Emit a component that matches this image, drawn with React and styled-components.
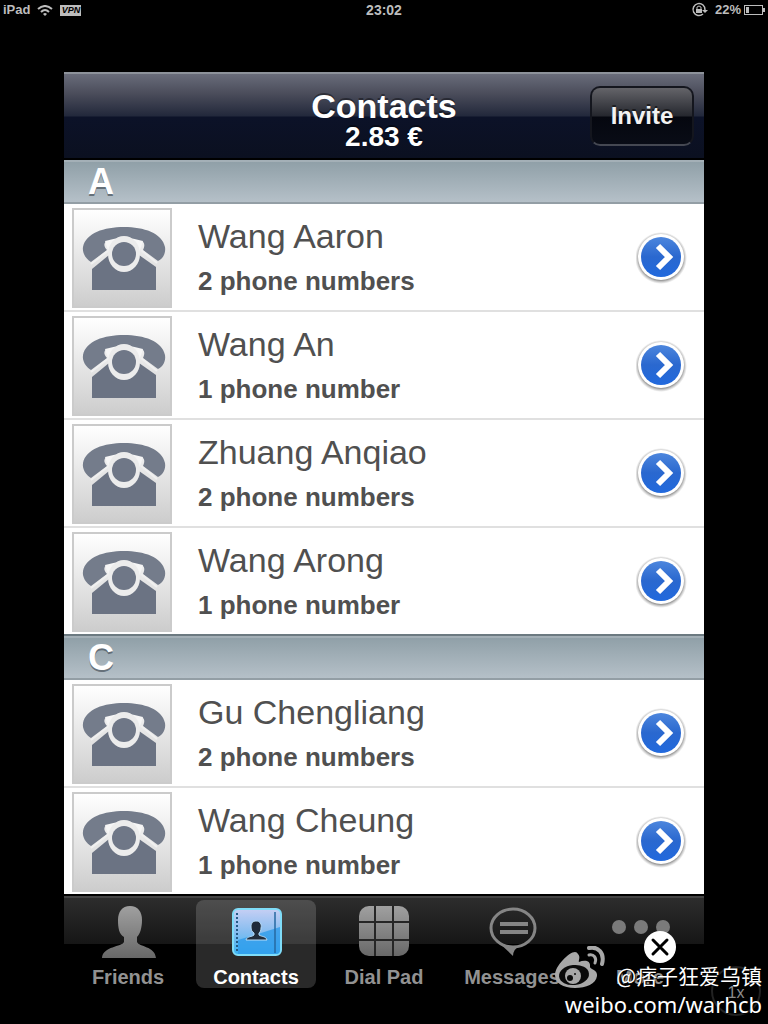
import React from "react";
import styled, { createGlobalStyle } from "styled-components";

const GlobalStyle = createGlobalStyle`
    * { box-sizing: border-box; }
    body { margin: 0; background: #000; font-family: "Liberation Sans", Arial, sans-serif; }
    h1, h2, h3, p, ul { margin: 0; padding: 0; }
    ul { list-style: none; }
    button { margin: 0; padding: 0; border: none; background: none; font-family: inherit; cursor: pointer; }
    a { text-decoration: none; color: inherit; }
    svg { display: block; }
`;

const Screen = styled.div`
    position: relative;
    min-height: 100vh;
    background: #000;
    padding-bottom: 32px;
    overflow: hidden;
`;

const StatusBar = styled.div`
    display: grid;
    grid-template-columns: 1fr auto 1fr;
    align-items: center;
    height: 20px;
    padding: 0 3px;
    color: #bdbdbd;
    font-size: 14px;
    line-height: 20px;
    font-weight: bold;
`;
const StatusLeft = styled.div`
    display: flex;
    align-items: center;
    gap: 7px;
    font-size: 13px;
`;
const StatusRight = styled.div`
    display: flex;
    align-items: center;
    justify-content: flex-end;
    gap: 3px;
    font-size: 13px;
    .lock { margin-right: 4px; }
`;
const Vpn = styled.span`
    background: #bdbdbd;
    color: #000;
    width: 21px;
    height: 11px;
    font-size: 9px;
    line-height: 11px;
    font-style: italic;
    text-align: center;
`;

const Panel = styled.div`
    margin: 52px 64px 0;
`;

const Header = styled.header`
    display: grid;
    grid-template-columns: 1fr auto 1fr;
    align-items: center;
    height: 88px;
    padding: 0 10px;
    border-top: 2px solid #8d929a;
    border-bottom: 2px solid #000;
    background: linear-gradient(#696c7a 0, #4a4c5a 20px, #22283b 42px, #0c1228 43px, #0b1020 100%);
`;
const TitleBox = styled.div`
    grid-column: 2;
    text-align: center;
    color: #fff;
    font-weight: bold;
    text-shadow: 0 -2px 0 rgba(0, 0, 0, 0.4);
    padding-top: 8px;
    h1 { font-size: 34px; line-height: 34px; }
    p { font-size: 28px; line-height: 28px; }
`;
const InviteButton = styled.button`
    justify-self: end;
    width: 104px;
    height: 60px;
    border: 2px solid #14161e;
    border-bottom-color: #454852;
    border-radius: 10px;
    background: linear-gradient(#646469 0, #25272e 28px, #05070f 29px, #090c16 100%);
    color: #f2f2f2;
    font-size: 24px;
    font-weight: bold;
    text-shadow: 0 -2px 0 rgba(0, 0, 0, 0.5);
`;

const SectionTitle = styled.h2`
    height: ${(props) => (props.$first ? 44 : 46)}px;
    border-top: ${(props) => (props.$first ? "none" : "2px solid #6c7a81")};
    border-bottom: 2px solid #939ea5;
    background: linear-gradient(#a4b0b7 0, #a4b0b7 2px, #90a0a8 2px, #b5c0c8 100%);
    padding-left: 24px;
    color: #fff;
    font-size: 36px;
    line-height: 44px;
    text-shadow: 0 2px 0 rgba(70, 80, 90, 0.7);
`;

const Row = styled.li`
    display: flex;
    align-items: center;
    height: 108px;
    padding: 4px 16px 2px 8px;
    background: #fff;
    border-bottom: 2px solid #e0e0e0;
    &:last-child { height: 106px; border-bottom: none; }
`;
const Avatar = styled.div`
    flex: none;
    width: 100px;
    height: 100px;
    border: 2px solid #cbcbcb;
    background: linear-gradient(#fff, #cdcdcd);
`;
const Info = styled.div`
    flex: 1;
    padding-left: 26px;
    height: 100px;
    h3 { font-size: 34px; line-height: 56px; font-weight: normal; color: #505050; }
    p { font-size: 26px; line-height: 34px; font-weight: bold; color: #505050; }
`;
const ArrowButton = styled.button`
    display: flex;
    align-items: center;
    justify-content: center;
    width: 52px;
    height: 52px;
`;

const TabBar = styled.nav`
    display: grid;
    grid-template-columns: repeat(5, 1fr);
    height: 98px;
    border-top: 2px solid #000;
    background: linear-gradient(#444 0, #444 2px, #2d2d2d 2px, #161616 48px, #000 48px);
`;
const Tab = styled.a`
    display: flex;
    flex-direction: column;
    align-items: center;
    justify-content: space-between;
    height: 88px;
    margin: 4px 4px 0;
    padding-top: 4px;
    border-radius: 8px;
    background: ${(props) => (props.$active ? "rgba(255, 255, 255, 0.16)" : "none")};
    color: ${(props) => (props.$active ? "#fff" : "#929292")};
    font-size: 20px;
    line-height: 22px;
    font-weight: bold;
    white-space: nowrap;
`;

const CloseButton = styled.button`
    position: absolute;
    right: 91px;
    bottom: 60px;
    width: 34px;
    height: 34px;
`;
const ZoomButton = styled.button`
    position: absolute;
    right: 7px;
    bottom: 8px;
    width: 50px;
    height: 50px;
    border: 2px solid #222;
    border-radius: 50%;
    color: #8c8c8c;
    font-size: 16px;
    padding-top: 4px;
`;
const Watermark = styled.div`
    position: absolute;
    right: 6px;
    bottom: 6px;
    display: flex;
    flex-direction: column;
    align-items: flex-end;
    color: #fff;
    text-shadow: 1px 1px 1px #000;
    pointer-events: none;
    div { display: flex; align-items: flex-end; gap: 10px; }
    span { font-family: "Noto Sans CJK SC", sans-serif; font-size: 21px; line-height: 30px; }
    p { font-family: "Noto Sans", sans-serif; font-size: 22px; line-height: 28px; }
`;

const sections = [
    {
        letter: "A",
        contacts: [
            { name: "Wang Aaron", phones: "2 phone numbers" },
            { name: "Wang An", phones: "1 phone number" },
            { name: "Zhuang Anqiao", phones: "2 phone numbers" },
            { name: "Wang Arong", phones: "1 phone number" },
        ],
    },
    {
        letter: "C",
        contacts: [
            { name: "Gu Chengliang", phones: "2 phone numbers" },
            { name: "Wang Cheung", phones: "1 phone number" },
        ],
    },
];

const PhoneIcon = () => (
    <svg width="96" height="96" viewBox="0 0 96 96">
        <path d="M18 59 L35 45 H65 L82 57 V80 H18 Z" fill="#6b7383" />
        <path d="M9 37 C12 23 30 17 50 17 C70 17 88 23 91 37 C92 43 89 49 84 51 L69 40 C71 36 71 32 67 31 L33 31 C29 33 30 37 33 40 L17 52 C12 49 8 43 9 37 Z" fill="#747c8b" />
        <path d="M17 54 L35 40 M83 53 L67 40" stroke="#f0f0f0" strokeWidth="2" />
        <path d="M31 31 Q50 25 69 31 L65 43 H35 Z" fill="#f6f6f6" />
        <ellipse cx="50" cy="44" rx="16" ry="18" fill="#ececec" />
        <circle cx="50" cy="44" r="12" fill="#6f7787" />
    </svg>
);

const ArrowIcon = () => (
    <svg width="52" height="52" viewBox="0 0 52 52">
        <defs>
            <linearGradient id="arrowBlue" x1="0" y1="0" x2="0" y2="1">
                <stop offset="0" stopColor="#4c86dd" />
                <stop offset="0.5" stopColor="#2a68cf" />
                <stop offset="1" stopColor="#2169dd" />
            </linearGradient>
            <radialGradient id="arrowShade">
                <stop offset="0.84" stopColor="#777" stopOpacity="0.9" />
                <stop offset="1" stopColor="#aaa" stopOpacity="0" />
            </radialGradient>
        </defs>
        <circle cx="25" cy="26" r="26" fill="url(#arrowShade)" />
        <circle cx="25" cy="25" r="23" fill="#fff" />
        <circle cx="25" cy="25" r="20" fill="url(#arrowBlue)" />
        <path d="M22 14 L33 25 L22 36" fill="none" stroke="#fff" strokeWidth="6" />
    </svg>
);

const GrayGradient = ({ id }) => (
    <linearGradient id={id} x1="0" y1="0" x2="0" y2="1">
        <stop offset="0" stopColor="#a0a0a0" />
        <stop offset="1" stopColor="#686868" />
    </linearGradient>
);

const FriendsIcon = () => (
    <svg width="56" height="54" viewBox="0 0 56 54">
        <defs><GrayGradient id="friendGray" /></defs>
        <path d="M30 2 C38 2 42 8 42 16 C42 24 40 30 37 33 V38 C39 43 55 42 56 54 H2 C3 42 22 43 24 38 V33 C19 30 18 24 18 16 C18 8 22 2 30 2 Z" fill="url(#friendGray)" />
    </svg>
);

const BookIcon = () => (
    <svg width="52" height="54" viewBox="0 0 52 54">
        <defs>
            <linearGradient id="bookBlue" x1="0" y1="0" x2="0" y2="1">
                <stop offset="0" stopColor="#c6cff4" />
                <stop offset="0.5" stopColor="#86bdf0" />
                <stop offset="1" stopColor="#38b4f4" />
            </linearGradient>
        </defs>
        <rect x="3" y="5" width="48" height="46" rx="5" fill="url(#bookBlue)" stroke="#7fdcf8" strokeWidth="2" />
        <path d="M8 36 Q28 30 50 23 V46 Q50 50 46 50 H8 Z" fill="#2f9ceb" opacity="0.8" />
        <path d="M7 9 V49" stroke="#245b86" strokeWidth="2" strokeDasharray="2 2" />
        <path d="M45 8 V49" stroke="#2668a0" strokeWidth="1.5" />
        <path d="M26 17 C30 17 32 20 31 24 C31 27 30 28 29 29 V31 C32 33 36 32 37 36 H16 C17 32 22 33 24 31 V29 C22 28 21 26 21 23 C21 19 23 17 26 17 Z" fill="#202b3a" stroke="#b6dbf7" strokeWidth="1" />
    </svg>
);

const DialIcon = () => (
    <svg width="50" height="54" viewBox="0 0 50 54">
        <defs>
            <GrayGradient id="dialGray" />
            <clipPath id="dialClip"><rect y="2" width="50" height="50" rx="10" /></clipPath>
        </defs>
        <rect y="2" width="50" height="50" rx="10" fill="url(#dialGray)" />
        <path d="M16 2 V52 M34 2 V52 M0 18 H50 M0 36 H50" stroke="#262626" strokeWidth="2" clipPath="url(#dialClip)" />
    </svg>
);

const MessageIcon = () => (
    <svg width="50" height="54" viewBox="0 0 50 54">
        <ellipse cx="26" cy="24" rx="22" ry="19" fill="none" stroke="#858585" strokeWidth="3" />
        <path d="M12 39 Q24 45 34 41 Q26 45 26 52 Q20 46 12 39 Z" fill="#858585" />
        <path d="M13 20 H41 M13 28 H41" stroke="#858585" strokeWidth="4" />
    </svg>
);

const MoreIcon = () => (
    <svg width="60" height="54" viewBox="0 0 60 54" fill="#7a7a7a">
        <circle cx="9" cy="23" r="7" />
        <circle cx="31" cy="23" r="7" />
        <circle cx="53" cy="23" r="7" />
    </svg>
);

const WeiboIcon = () => (
    <svg width="52" height="44" viewBox="0 0 52 44">
        <path d="M24 8 C27 11 24 15 25 16 C30 14 37 14 36 21 C36 23 44 24 43 30 C42 38 32 42 21 42 C9 42 1 37 1 29 C1 20 15 6 21 6 Q23 6 24 8 Z" fill="#a8a8a8" />
        <ellipse cx="20" cy="29" rx="15" ry="10" fill="#0a0a0a" transform="rotate(-6 20 29)" />
        <circle cx="19" cy="30" r="8" fill="#a8a8a8" />
        <circle cx="16" cy="32" r="3" fill="#0a0a0a" />
        <circle cx="21" cy="28" r="1" fill="#0a0a0a" />
        <path d="M35 2 C44 0 51 7 48 18" fill="none" stroke="#a8a8a8" strokeWidth="4" strokeLinecap="round" />
        <path d="M35 9 C40 8 43 12 41 17" fill="none" stroke="#a8a8a8" strokeWidth="3" strokeLinecap="round" />
    </svg>
);

const WifiIcon = () => (
    <svg width="16" height="11" viewBox="0 0 16 11" fill="none" stroke="#bdbdbd" strokeWidth="2">
        <path d="M1 4 Q8 -2 15 4 M4 7 Q8 3 12 7" />
        <path d="M6 9 Q8 7 10 9 L8 11 Z" fill="#bdbdbd" stroke="none" />
    </svg>
);

const LockIcon = () => (
    <svg className="lock" width="17" height="16" viewBox="0 0 17 16" fill="none" stroke="#bdbdbd">
        <path d="M12 12 A6 6 0 1 1 14 8" strokeWidth="1.5" />
        <path d="M11 8 H17 L14 11 Z" fill="#bdbdbd" stroke="none" />
        <rect x="5" y="7" width="6" height="4" fill="#bdbdbd" stroke="none" />
        <path d="M6 7 V5 Q8 3 10 5 V7" strokeWidth="1" />
    </svg>
);

const BatteryIcon = () => (
    <svg width="21" height="10" viewBox="0 0 21 10">
        <rect x="0.5" y="0.5" width="18" height="9" fill="none" stroke="#bdbdbd" />
        <rect x="2" y="2" width="3" height="6" fill="#bdbdbd" />
        <path d="M19 3 H21 V7 H19" fill="#bdbdbd" />
    </svg>
);

const tabs = [
    { label: "Friends", icon: <FriendsIcon /> },
    { label: "Contacts", icon: <BookIcon />, active: true },
    { label: "Dial Pad", icon: <DialIcon /> },
    { label: "Messages", icon: <MessageIcon /> },
    { label: "More", icon: <MoreIcon /> },
];

const App = () => {
    return (
        <Screen>
            <GlobalStyle />
            <StatusBar>
                <StatusLeft>iPad <WifiIcon /><Vpn>VPN</Vpn></StatusLeft>
                <span>23:02</span>
                <StatusRight><LockIcon />22% <BatteryIcon /></StatusRight>
            </StatusBar>
            <Panel>
                <Header>
                    <TitleBox>
                        <h1>Contacts</h1>
                        <p>2.83 €</p>
                    </TitleBox>
                    <InviteButton>Invite</InviteButton>
                </Header>
                {sections.map((section, index) => (
                    <section key={section.letter}>
                        <SectionTitle $first={index === 0}>{section.letter}</SectionTitle>
                        <ul>
                            {section.contacts.map((contact) => (
                                <Row key={contact.name}>
                                    <Avatar><PhoneIcon /></Avatar>
                                    <Info>
                                        <h3>{contact.name}</h3>
                                        <p>{contact.phones}</p>
                                    </Info>
                                    <ArrowButton aria-label={"Open " + contact.name}><ArrowIcon /></ArrowButton>
                                </Row>
                            ))}
                        </ul>
                    </section>
                ))}
                <TabBar>
                    {tabs.map((tab) => (
                        <Tab key={tab.label} href="#" $active={tab.active}>
                            {tab.icon}
                            {tab.label}
                        </Tab>
                    ))}
                </TabBar>
            </Panel>
            <ZoomButton>1x</ZoomButton>
            <Watermark>
                <div><WeiboIcon /><span>@痞子狂爱乌镇</span></div>
                <p>weibo.com/warhcb</p>
            </Watermark>
            <CloseButton aria-label="Close">
                <svg width="34" height="34" viewBox="0 0 34 34">
                    <circle cx="17" cy="17" r="16" fill="#fff" />
                    <path d="M10 10 L24 24 M24 10 L10 24" stroke="#000" strokeWidth="3" strokeLinecap="round" />
                </svg>
            </CloseButton>
        </Screen>
    );
};

export default App;
